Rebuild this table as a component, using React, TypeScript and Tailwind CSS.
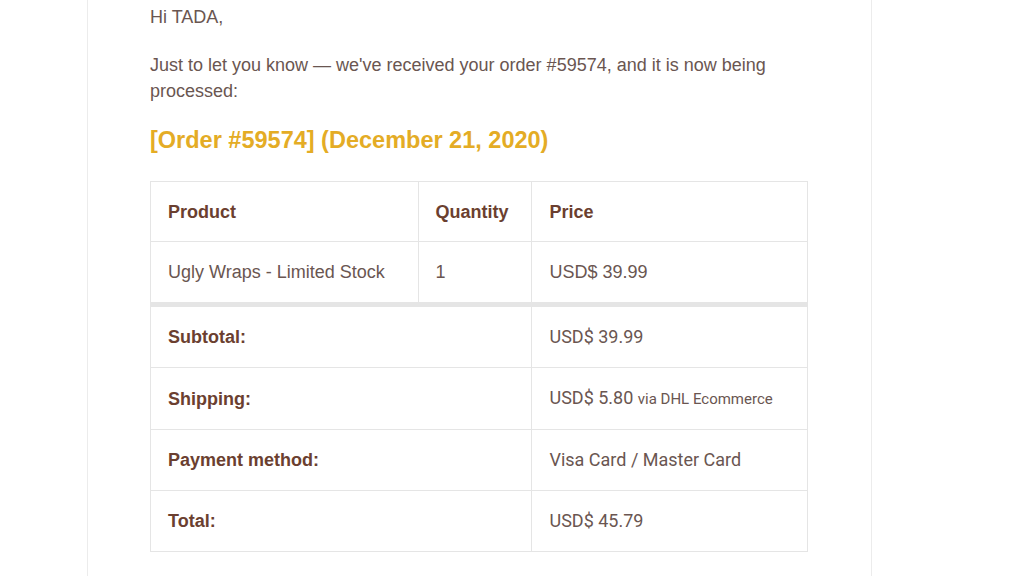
import React from "react";

const cell = "border border-[#e5e5e5] px-[17px] py-[18px] text-left align-middle";
const headCell = "border border-[#e5e5e5] px-[17px] pt-[18px] pb-[17px] text-left align-middle font-bold text-[#6b3f30]";

export default function App() {
  return (
    <div className="w-[1024px] h-[576px] overflow-hidden bg-white font-['Liberation_Sans',Arial,sans-serif] text-[18px] leading-[26px] text-[#6a5651]">
      <div className="ml-[87px] w-[785px] h-full border-x border-[#ececec] pl-[62px] pt-[4px]">
        <p className="m-0">Hi TADA,</p>
        <p className="mt-[22px] mb-0 w-[650px]">
          Just to let you know — we've received your order #59574, and it is now being processed:
        </p>
        <h2 className="mt-[21px] mb-0 text-[23.5px] leading-[30px] font-bold text-[#e4ac25]">
          [Order #59574] (December 21, 2020)
        </h2>
        <table className="mt-[26px] w-[658px] border-collapse border border-[#e5e5e5] leading-[24px]">
          <colgroup>
            <col className="w-[268px]" />
            <col className="w-[114px]" />
            <col className="w-[276px]" />
          </colgroup>
          <thead>
            <tr>
              <th className={headCell}>Product</th>
              <th className={headCell}>Quantity</th>
              <th className={headCell}>Price</th>
            </tr>
          </thead>
          <tbody>
            <tr>
              <td className={cell}>Ugly Wraps - Limited Stock</td>
              <td className={cell}>1</td>
              <td className={cell}>USD$ 39.99</td>
            </tr>
          </tbody>
          <tfoot>
            <tr>
              <th colSpan={2} className={`${cell} border-t-[5px] font-bold text-[#6b3f30]`}>Subtotal:</th>
              <td className={`${cell} border-t-[5px] font-['Roboto',sans-serif]`}>USD$ 39.99</td>
            </tr>
            <tr>
              <th colSpan={2} className={`${cell} font-bold text-[#6b3f30]`}>Shipping:</th>
              <td className={`${cell} font-['Roboto',sans-serif]`}>
                USD$ 5.80 <span className="text-[15px]">via DHL Ecommerce</span>
              </td>
            </tr>
            <tr>
              <th colSpan={2} className={`${cell} font-bold text-[#6b3f30]`}>Payment method:</th>
              <td className={`${cell} font-['Roboto',sans-serif]`}>Visa Card / Master Card</td>
            </tr>
            <tr>
              <th colSpan={2} className={`${cell} font-bold text-[#6b3f30]`}>Total:</th>
              <td className={`${cell} font-['Roboto',sans-serif]`}>USD$ 45.79</td>
            </tr>
          </tfoot>
        </table>
      </div>
    </div>
  );
}
